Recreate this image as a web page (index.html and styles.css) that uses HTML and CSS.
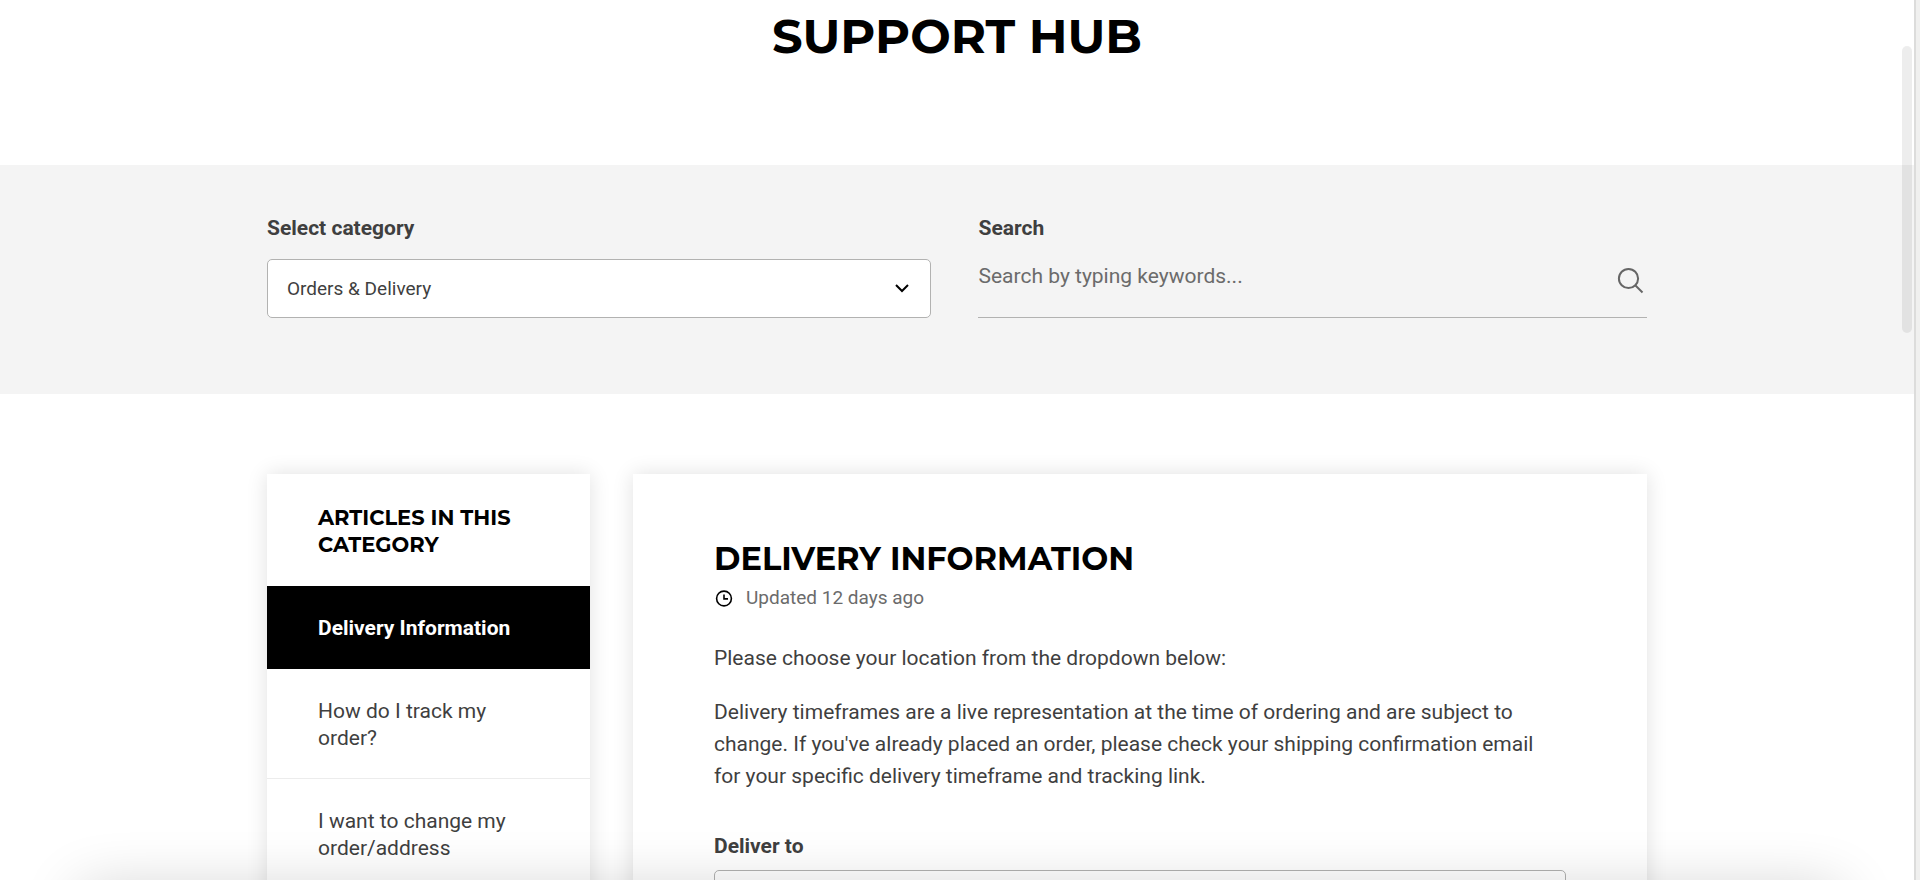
FILE: index.html
```html
<!DOCTYPE html>
<html lang="en">
<head>
<meta charset="utf-8">
<title>Support Hub</title>
<link rel="stylesheet" href="styles.css">
</head>
<body>
<div class="viewport">
  <div class="page">
    <header class="hero">
      <h1 class="hero-title">SUPPORT HUB</h1>
    </header>

    <section class="filters">
      <form class="container filter-grid">
        <div class="field">
          <label class="label" for="category">Select category</label>
          <div class="select-wrap">
            <select class="select" id="category">
              <option>Orders &amp; Delivery</option>
            </select>
            <svg class="chevron" viewBox="0 0 16 16" aria-hidden="true"><path d="M2 5l6 6 6-6"/></svg>
          </div>
        </div>
        <div class="field">
          <label class="label" for="search">Search</label>
          <div class="search">
            <input class="search-input" id="search" type="text" placeholder="Search by typing keywords...">
            <button class="search-button" type="submit" aria-label="Search">
              <svg class="search-icon" viewBox="0 0 28 28" aria-hidden="true"><circle cx="11.5" cy="11.5" r="9.6"/><path d="M18.5 18.5l7 7"/></svg>
            </button>
          </div>
        </div>
      </form>
    </section>

    <main class="container content">
      <nav class="sidebar">
        <h2 class="sidebar-title">ARTICLES IN THIS CATEGORY</h2>
        <a class="article-link active" href="#delivery">Delivery Information</a>
        <a class="article-link" href="#track">How do I track my order?</a>
        <a class="article-link" href="#change">I want to change my order/address</a>
      </nav>
      <article class="card">
        <h2 class="card-title">DELIVERY INFORMATION</h2>
        <p class="updated">
          <svg class="clock" viewBox="0 0 20 20" aria-hidden="true"><circle cx="10" cy="10.5" r="7.4"/><path d="M10 6.5v4.4h4"/></svg>
          Updated 12 days ago
        </p>
        <p class="text">Please choose your location from the dropdown below:</p>
        <p class="text">Delivery timeframes are a live representation at the time of ordering and are subject to change. If you've already placed an order, please check your shipping confirmation email for your specific delivery timeframe and tracking link.</p>
        <label class="label deliver-label" for="deliver">Deliver to</label>
        <select class="select" id="deliver"><option></option></select>
      </article>
    </main>
  </div>
  <div class="edge"></div>
  <div class="scroll-thumb"></div>
  <div class="bottom-shade"></div>
</div>
</body>
</html>
```
FILE: styles.css
```css
* { box-sizing: border-box; }

body {
  margin: 0;
  background: #fff;
  color: #3f3f3f;
  font-family: Roboto, "Liberation Sans", sans-serif;
  font-size: 21px;
  line-height: 27px;
}

.viewport {
  position: relative;
  display: flex;
  height: 100vh;
  overflow: hidden;
}

.page { flex: 1; min-width: 0; }

.edge {
  width: 6px;
  border-left: 2px solid #dcdcdb;
  background: #f0f0ef;
}

.container {
  width: 100%;
  max-width: 1380px;
  margin: 0 auto;
}

.hero {
  padding: 12px 16px 105px;
  text-align: center;
}

.hero-title,
.sidebar-title,
.card-title {
  margin: 0;
  color: #000;
  font-family: Montserrat, Inter, sans-serif;
  font-weight: 700;
}

.hero-title { font-size: 48px; line-height: 48px; }

.filters {
  padding: 50px 0 76px;
  background: #f4f4f4;
}

.filter-grid {
  display: grid;
  grid-template-columns: 664fr 668fr;
  gap: 47px;
}

.label {
  display: block;
  margin-bottom: 17px;
  font-weight: 700;
}

.select-wrap { position: relative; }

.select {
  display: block;
  width: 100%;
  height: 59px;
  padding: 0 19px;
  appearance: none;
  border: 1px solid #b2b2b1;
  border-radius: 5px;
  background: #fff;
  color: #3f3f3f;
  font: inherit;
  font-size: 19px;
}

.chevron {
  position: absolute;
  top: 21px;
  right: 21px;
  width: 16px;
  height: 16px;
  fill: none;
  stroke: #000;
  stroke-width: 2;
}

.search {
  display: flex;
  height: 59px;
  align-items: flex-start;
  border-bottom: 1px solid #b2b2b1;
}

.search-input {
  flex: 1;
  min-width: 0;
  height: 34px;
  padding: 0;
  border: 0;
  background: none;
  color: #3f3f3f;
  font: inherit;
}

.search-input::placeholder { color: #6b6b6b; opacity: 1; }

.search-button {
  padding: 8px 2px 0 0;
  border: 0;
  background: none;
}

.search-icon {
  display: block;
  width: 28px;
  height: 28px;
  fill: none;
  stroke: #666;
  stroke-width: 2;
}

.content {
  display: grid;
  grid-template-columns: 323fr 1014fr;
  gap: 43px;
  padding-top: 80px;
}

.sidebar,
.card {
  background: #fff;
  box-shadow: 0 0 20px rgba(0, 0, 0, 0.12);
}

.sidebar-title {
  padding: 30px 51px 28px;
  font-size: 21px;
  line-height: 27px;
}

.article-link {
  display: block;
  padding: 29px 51px 26px;
  border-bottom: 1px solid #ececec;
  color: #3f3f3f;
  text-decoration: none;
}

.article-link.active {
  border-color: #000;
  background: #000;
  color: #fff;
  font-weight: 700;
}

.card { padding: 65px 81px; }

.card-title { font-size: 32px; line-height: 40px; }

.updated {
  display: flex;
  align-items: center;
  gap: 12px;
  margin: 5px 0 31px;
  color: #6b6b6b;
  font-size: 19px;
}

.clock {
  width: 20px;
  height: 20px;
  fill: none;
  stroke: #000;
  stroke-width: 1.6;
}

.text {
  max-width: 840px;
  margin: 0 0 22px;
  line-height: 32px;
}

.deliver-label { margin: 41px 0 10px; }

.scroll-thumb {
  position: absolute;
  top: 46px;
  right: 8px;
  width: 10px;
  height: 287px;
  border-radius: 5px;
  background: rgba(0, 0, 0, 0.07);
}

.bottom-shade {
  position: absolute;
  right: 80px;
  bottom: -60px;
  left: 80px;
  height: 50px;
  box-shadow: 0 0 60px rgba(0, 0, 0, 0.2);
}
```
